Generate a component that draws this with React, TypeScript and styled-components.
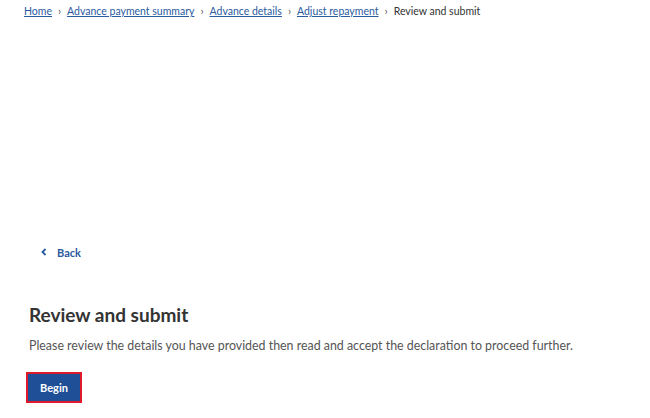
import React from "react";
import styled, { createGlobalStyle } from "styled-components";

const Global = createGlobalStyle`
  html, body { margin: 0; padding: 0; background: #fff; }
  body { font-family: Lato, "Noto Sans", sans-serif; color: #333; }
`;

const Page = styled.div`
  display: flex;
  flex-direction: column;
  padding: 4px 24px 0 24px;
`;

const Crumbs = styled.nav`
  display: flex;
  align-items: center;
  gap: 6px;
  font-size: 10.5px;
  line-height: 14px;
  height: 14px;
`;

const CrumbLink = styled.a`
  color: #2a5aa0;
  text-decoration: underline;
  text-underline-offset: 1px;
`;

const Sep = styled.span`
  color: #555;
  font-size: 11px;
`;

const Current = styled.span`
  color: #333;
`;

const BackRow = styled.div`
  margin-top: 226px;
  padding-left: 17px;
  display: flex;
  align-items: center;
  gap: 10px;
  font-size: 11px;
  font-weight: 700;
  color: #2a5aa0;
  height: 16px;
`;

const Main = styled.main`
  margin-top: 42px;
  padding-left: 5px;
  display: flex;
  flex-direction: column;
  align-items: flex-start;
`;

const Title = styled.h1`
  margin: 0;
  font-size: 19px;
  line-height: 26px;
  font-weight: 700;
  color: #333;
`;

const Lead = styled.p`
  margin: 9px 0 0;
  font-size: 12.4px;
  line-height: 18px;
  color: #555;
  white-space: nowrap;
`;

const Btn = styled.button`
  margin-top: 17px;
  margin-left: -3px;
  font-family: inherit;
  font-size: 11px;
  font-weight: 700;
  color: #fff;
  background: #1f4f97;
  border: 2px solid #e01a2a;
  width: 56px;
  height: 31px;
  padding: 0;
`;

export default function App() {
  return (
    <>
      <Global />
      <Page>
        <Crumbs>
          <CrumbLink href="#">Home</CrumbLink>
          <Sep>›</Sep>
          <CrumbLink href="#">Advance payment summary</CrumbLink>
          <Sep>›</Sep>
          <CrumbLink href="#">Advance details</CrumbLink>
          <Sep>›</Sep>
          <CrumbLink href="#">Adjust repayment</CrumbLink>
          <Sep>›</Sep>
          <Current>Review and submit</Current>
        </Crumbs>
        <BackRow>
          <svg width="6" height="8" viewBox="0 0 6 8">
            <path d="M4.5 1 L1.5 4 L4.5 7" stroke="#2a5aa0" strokeWidth="1.8" fill="none" />
          </svg>
          <span>Back</span>
        </BackRow>
        <Main>
          <Title>Review and submit</Title>
          <Lead>Please review the details you have provided then read and accept the declaration to proceed further.</Lead>
          <Btn>Begin</Btn>
        </Main>
      </Page>
    </>
  );
}
